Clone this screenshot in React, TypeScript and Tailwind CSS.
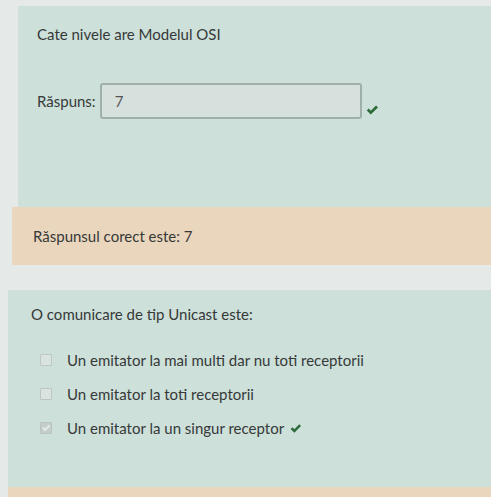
import React from 'react';

const Check = ({ className = '' }: { className?: string }) => (
  <svg viewBox="0 0 16 16" className={className} fill="currentColor">
    <path d="M2 8.6 L4.2 6.4 L6.6 8.8 L12.6 2.8 L14.8 5 L6.6 13.2 Z" />
  </svg>
);

const Box = ({ checked }: { checked?: boolean }) => (
  <span
    className={
      'w-[12px] h-[12px] border rounded-[1px] flex items-center justify-center ' +
      (checked ? 'border-[#b8c2bf] bg-[#c4cecb] text-[#e4ebe8]' : 'border-[#bcc7c4] bg-[#d9e3e0]')
    }
  >
    {checked && <Check className="w-[10px] h-[10px]" />}
  </span>
);

const options = [
  { label: 'Un emitator la mai multi dar nu toti receptorii', checked: false },
  { label: 'Un emitator la toti receptorii', checked: false },
  { label: 'Un emitator la un singur receptor', checked: true },
];

export default function App() {
  return (
    <div
      className="w-[491px] h-[497px] overflow-hidden bg-[#e5e9e7] text-[#363938] text-[15px] leading-[22px]"
      style={{ fontFamily: 'Lato, "Noto Sans", sans-serif' }}
    >
      {/* question 1 */}
      <div className="ml-[18px] mt-[6px] h-[201px] bg-[#cde0da] pl-[19px] pt-[17px]">
        <p>Cate nivele are Modelul OSI</p>
        <div className="mt-[38px] flex items-center">
          <span className="mr-[4px]">Răspuns:</span>
          <div className="w-[262px] h-[36px] border-2 border-[#9fb0ab] rounded-[3px] bg-[#d6e0dc] flex items-center pl-[13px] text-[#555]">
            7
          </div>
          <Check className="w-[14px] h-[14px] ml-[3px] mt-[18px] text-[#2d6a3a]" />
        </div>
      </div>
      <div className="ml-[12px] h-[58px] bg-[#ead6bd] pl-[21px] flex items-center">
        Răspunsul corect este: 7
      </div>

      {/* question 2 */}
      <div className="ml-[8px] mt-[25px] h-[197px] bg-[#cde0da] pl-[23px] pt-[13px]">
        <p>O comunicare de tip Unicast este:</p>
        <div className="mt-[24px] flex flex-col gap-[12px] pl-[9px]">
          {options.map((o) => (
            <div key={o.label} className="flex items-center">
              <Box checked={o.checked} />
              <span className="ml-[15px]">{o.label}</span>
              {o.checked && <Check className="w-[13px] h-[13px] ml-[5px] text-[#2d6a3a]" />}
            </div>
          ))}
        </div>
      </div>
      <div className="ml-[8px] h-[20px] bg-[#ead6bd]" />
    </div>
  );
}
